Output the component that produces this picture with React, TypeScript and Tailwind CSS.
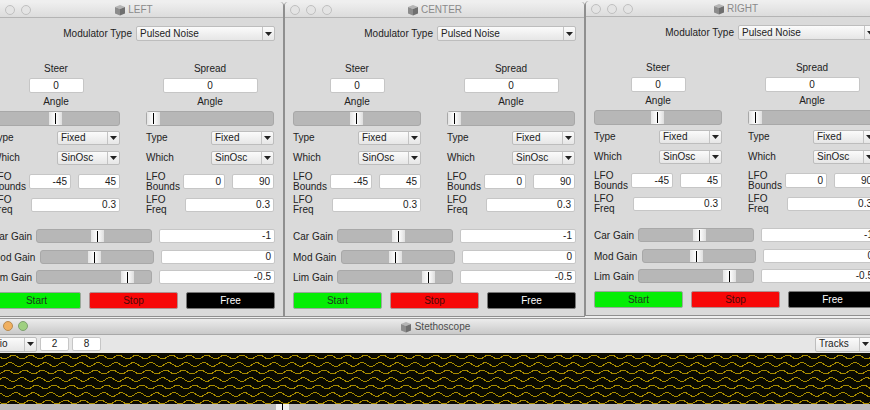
const FONT = "font-['Liberation_Sans',Arial,sans-serif]";

function Cube() {
  return (
    <svg width="12" height="12" viewBox="0 0 12 12" className="shrink-0">
      <path d="M1 3 L6 1 L11 3 L6 5 Z" fill="#b5b5b5" />
      <path d="M1 3 L6 5 L6 11.5 L1 9.5 Z" fill="#8c8c8c" />
      <path d="M11 3 L6 5 L6 11.5 L11 9.5 Z" fill="#6f6f6f" />
    </svg>
  );
}

function Arrow() {
  return (
    <svg width="7" height="4" viewBox="0 0 7 4">
      <path d="M0 0 H7 L3.5 4 Z" fill="#222" />
    </svg>
  );
}

function Popup({ value, className }: { value: string; className: string }) {
  return (
    <div className={`flex items-center rounded-[2px] border border-[#bdbdbd] bg-gradient-to-b from-[#fbfbfb] to-[#e6e6e6] ${className}`}>
      <span className="flex-1 truncate pl-[3px] leading-none text-[#222]">{value}</span>
      <span className="flex h-full w-[12px] shrink-0 items-center justify-center border-l border-[#c4c4c4]">
        <Arrow />
      </span>
    </div>
  );
}

function Field({ value, center, className }: { value: string; center?: boolean; className: string }) {
  return (
    <div className={`flex items-center rounded-[2px] border border-[#c6c6c6] bg-white leading-none text-[#222] ${center ? "justify-center" : "justify-end pr-[3px]"} ${className}`}>
      {value}
    </div>
  );
}

function Slider({ thumb, className }: { thumb: string; className: string }) {
  return (
    <div className={`relative rounded-[3px] border border-[#a8a8a8] bg-[#b7b7b7] ${className}`}>
      <div className={`absolute top-0 flex h-full w-[13px] items-center justify-center bg-gradient-to-r from-[#e4e4e4] via-[#ffffff] to-[#dedede] ${thumb}`}>
        <div className="h-[11px] w-px bg-black" />
      </div>
    </div>
  );
}

function Row({ label, children, className }: { label: string; children: React.ReactNode; className: string }) {
  return (
    <div className={`flex items-center justify-between ${className}`}>
      <span className="whitespace-pre-line leading-[10px] text-[#222]">{label}</span>
      {children}
    </div>
  );
}

function Column({ title, fieldW, angleThumb, lo, hi }: { title: string; fieldW: string; angleThumb: string; lo: string; hi: string }) {
  return (
    <div className="flex flex-col">
      <div className="h-[14px] text-center leading-[14px] text-[#222]">{title}</div>
      <Field value="0" center className={`mx-auto mt-[2px] h-[15px] ${fieldW}`} />
      <div className="mt-[2px] h-[14px] text-center leading-[14px] text-[#222]">Angle</div>
      <Slider thumb={angleThumb} className="mt-[2px] h-[15px]" />
      <Row label="Type" className="mt-[5px] h-[14px]">
        <Popup value="Fixed" className="h-[14px] w-[63px]" />
      </Row>
      <Row label="Which" className="mt-[6px] h-[14px]">
        <Popup value="SinOsc" className="h-[14px] w-[63px]" />
      </Row>
      <Row label={"LFO\nBounds"} className="mt-[9px] h-[15px]">
        <div className="flex gap-[7px]">
          <Field value={lo} className="h-[15px] w-[42px]" />
          <Field value={hi} className="h-[15px] w-[42px]" />
        </div>
      </Row>
      <Row label={"LFO\nFreq"} className="mt-[9px] h-[14px]">
        <Field value="0.3" className="h-[14px] w-[89px]" />
      </Row>
    </div>
  );
}

function Gain({ label, slider, thumb, value, field, className }: { label: string; slider: string; thumb: string; value: string; field: string; className: string }) {
  return (
    <div className={`flex h-[14px] items-center justify-between ${className}`}>
      <span className="whitespace-nowrap text-[#222]">{label}</span>
      <div className="flex items-center gap-[7px]">
        <Slider thumb={thumb} className={`h-[14px] ${slider}`} />
        <Field value={value} className={`h-[14px] ${field}`} />
      </div>
    </div>
  );
}

function Lights() {
  return (
    <div className="absolute left-[5px] top-[3px] flex gap-[6px]">
      <span className="h-[10px] w-[10px] rounded-full border border-[#c0c0c0] bg-[#e4e4e4]" />
      <span className="h-[10px] w-[10px] rounded-full border border-[#c0c0c0] bg-[#e4e4e4]" />
      <span className="h-[10px] w-[10px] rounded-full border border-[#c0c0c0] bg-[#e4e4e4]" />
    </div>
  );
}

function Panel({ name, className }: { name: string; className: string }) {
  return (
    <div className={`absolute flex w-[301px] flex-col rounded-t-[4px] border-x border-b border-[#8f8f8f] bg-[#dadada] ${className}`}>
      <div className="relative flex h-[16px] items-center justify-center gap-[2px] rounded-t-[4px] border-b border-[#b4b4b4] bg-gradient-to-b from-[#efefef] to-[#dcdcdc]">
        <Lights />
        <Cube />
        <span className="text-[#8a8a8a]">{name}</span>
      </div>
      <div className="flex flex-col px-[8px] pb-[7px]">
        <div className="mt-[8px] flex items-center justify-end gap-[4px]">
          <span className="text-[#222]">Modulator Type</span>
          <Popup value="Pulsed Noise" className="h-[15px] w-[139px]" />
        </div>
        <div className="mt-[21px] grid grid-cols-[128px_128px] gap-x-[26px]">
          <Column title="Steer" fieldW="w-[55px]" angleThumb="left-[56px]" lo="-45" hi="45" />
          <Column title="Spread" fieldW="w-[95px]" angleThumb="left-0" lo="0" hi="90" />
        </div>
        <Gain label="Car Gain" slider="w-[116px]" thumb="left-[54px]" value="-1" field="w-[116px]" className="mt-[17px]" />
        <Gain label="Mod Gain" slider="w-[114px]" thumb="left-[47px]" value="0" field="w-[114px]" className="mt-[7px]" />
        <Gain label="Lim Gain" slider="w-[116px]" thumb="left-[84px]" value="-0.5" field="w-[116px]" className="mt-[6px]" />
        <div className="mt-[8px] flex h-[17px] gap-[8px]">
          <div className="flex flex-1 items-center justify-center rounded-[2px] border border-[#9aa89a] bg-[#05ee05] text-[#1c3a1c]">Start</div>
          <div className="flex flex-1 items-center justify-center rounded-[2px] border border-[#b09090] bg-[#f70808] text-[#4a0a0a]">Stop</div>
          <div className="flex flex-1 items-center justify-center rounded-[2px] border border-[#777] bg-black text-white">Free</div>
        </div>
      </div>
    </div>
  );
}

const WAVE_ROWS = [4, 11.5, 19, 26.5, 34, 41.5, 49];

function wavePoints(y: number, i: number) {
  const pts: string[] = [];
  for (let x = 0; x <= 870; x += 2) {
    pts.push(`${x},${(y + 2 * Math.sin((x + i * 3) * (Math.PI * 2) / 17.6)).toFixed(1)}`);
  }
  return pts.join(" ");
}

function Scope() {
  return (
    <div className="absolute left-0 top-[318px] flex h-[92px] w-[870px] flex-col border-t border-[#9a9a9a] bg-[#e6e6e6]">
      <div className="relative flex h-[16px] shrink-0 items-center justify-center gap-[3px] border-b border-[#a8a8a8] bg-gradient-to-b from-[#ececec] to-[#c9c9c9]">
        <div className="absolute left-[3px] top-[2px] flex gap-[5px]">
          <span className="h-[10px] w-[10px] rounded-full border border-[#b88a50] bg-[#f0b060]" />
          <span className="h-[10px] w-[10px] rounded-full border border-[#7fa070] bg-[#9fd080]" />
        </div>
        <Cube />
        <span className="text-[#4d4d4d]">Stethoscope</span>
      </div>
      <div className="flex h-[18px] shrink-0 items-center justify-between">
        <div className="flex items-center gap-[3px]">
          <Popup value="Audio" className="-ml-[22px] h-[15px] w-[59px]" />
          <Field value="2" center className="h-[14px] w-[29px]" />
          <Field value="8" center className="h-[14px] w-[29px]" />
        </div>
        <Popup value="Tracks" className="-mr-[2px] h-[15px] w-[57px]" />
      </div>
      <svg width="870" height="51" viewBox="0 0 870 51" className="block shrink-0 bg-[#0a0a00]">
        {WAVE_ROWS.map((y, i) => (
          <polyline key={y} points={wavePoints(y, i)} fill="none" stroke="#a88c00" strokeWidth="1" shapeRendering="crispEdges" />
        ))}
      </svg>
      <div className="relative flex-1 bg-[#bdbdbd]">
        <div className="absolute left-[276px] top-0 flex h-full w-[13px] justify-center bg-[#f2f2f2]">
          <div className="h-full w-px bg-black" />
        </div>
      </div>
    </div>
  );
}

export default function App() {
  return (
    <div className={`relative h-[410px] w-[870px] overflow-hidden bg-[#efefef] text-[10px] ${FONT}`}>
      <Scope />
      <Panel name="LEFT" className="left-[-17px] top-[2px]" />
      <Panel name="RIGHT" className="left-[585px] top-[1px]" />
      <Panel name="CENTER" className="left-[284px] top-[2px]" />
    </div>
  );
}
